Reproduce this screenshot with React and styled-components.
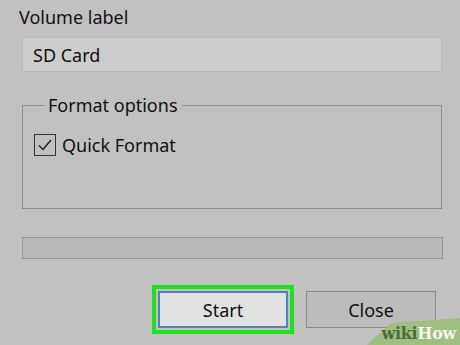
import React from "react";
import styled, { createGlobalStyle } from "styled-components";

const GlobalStyle = createGlobalStyle`
  html, body {
    margin: 0;
    padding: 0;
    background: #c1c1c1;
  }
  body {
    font-family: "Noto Sans", "Open Sans", sans-serif;
    color: #111;
  }
`;

const Dialog = styled.div`
  position: relative;
  width: 460px;
  height: 345px;
  overflow: hidden;
  background: #c1c1c1;
  padding: 0 18px 0 22px;
  box-sizing: border-box;
  display: flex;
  flex-direction: column;
`;

const Label = styled.div`
  font-size: 18px;
  line-height: 24px;
  margin: 5px 0 0 -3px;
`;

const TextBox = styled.div`
  margin-top: 8px;
  height: 35px;
  box-sizing: border-box;
  background: #cdcdcd;
  border: 1px solid #b9b9b9;
  font-size: 18px;
  padding-left: 10px;
  display: flex;
  align-items: center;
`;

const Group = styled.fieldset`
  margin: 22px 0 0 0;
  padding: 8px 11px 0;
  height: 115px;
  box-sizing: border-box;
  border: 1.5px solid #8e8e8e;

  legend {
    font-size: 18px;
    padding: 0 4px;
    margin-left: 10px;
    line-height: 22px;
  }
`;

const CheckRow = styled.label`
  display: flex;
  align-items: center;
  gap: 6px;
  font-size: 18px;
  margin-top: 9px;
`;

const Box = styled.span`
  width: 22px;
  height: 22px;
  box-sizing: border-box;
  border: 1.5px solid #333;
  display: flex;
  align-items: center;
  justify-content: center;
`;

const Progress = styled.div`
  margin-top: 28px;
  margin-right: -1px;
  height: 22px;
  box-sizing: border-box;
  background: #bbbbbb;
  border: 1.5px solid #979797;
`;

const Buttons = styled.div`
  margin-top: 26px;
  display: flex;
  justify-content: flex-end;
  align-items: center;
  gap: 12px;
  padding-right: 6px;
`;

const Highlight = styled.div`
  padding: 2px;
  border: 4px solid #1fe21f;
  background: #c1c1c1;
`;

const Button = styled.button`
  width: 130px;
  height: 37px;
  box-sizing: border-box;
  font-family: "Noto Sans", "Open Sans", sans-serif;
  font-size: 18px;
  color: #111;
  padding: 0;
  border: ${(p) => (p.$primary ? "2px solid #4a86b4" : "1.5px solid #8a8a8a")};
  background: ${(p) => (p.$primary ? "#e1e1e1" : "#bcbcbc")};
`;

const Watermark = styled.div`
  position: absolute;
  right: 0;
  bottom: 0;
  width: 95px;
  height: 32px;

  svg {
    position: absolute;
    inset: 0;
  }

  span {
    position: absolute;
    right: 4px;
    bottom: 2px;
    font-family: "DejaVu Serif", "Liberation Serif", serif;
    font-weight: bold;
    font-size: 16px;
    letter-spacing: -0.3px;
    color: #4c6a3a;
  }

  b {
    color: #f4f8ee;
  }
`;

export default function App() {
  return (
    <>
      <GlobalStyle />
      <Dialog>
        <Label>Volume label</Label>
        <TextBox>SD Card</TextBox>
        <Group>
          <legend>Format options</legend>
          <CheckRow>
            <Box>
              <svg width="16" height="14" viewBox="0 0 16 14">
                <path d="M2 7.5 L6 11.5 L14 2" fill="none" stroke="#222" strokeWidth="1.5" />
              </svg>
            </Box>
            Quick Format
          </CheckRow>
        </Group>
        <Progress />
        <Buttons>
          <Highlight>
            <Button $primary>Start</Button>
          </Highlight>
          <Button>Close</Button>
        </Buttons>
        <Watermark>
          <svg width="95" height="32" viewBox="0 0 95 32">
            <polygon points="2,32 26,10 95,5 95,32" fill="#9dbf80" />
          </svg>
          <span>
            wiki<b>How</b>
          </span>
        </Watermark>
      </Dialog>
    </>
  );
}
